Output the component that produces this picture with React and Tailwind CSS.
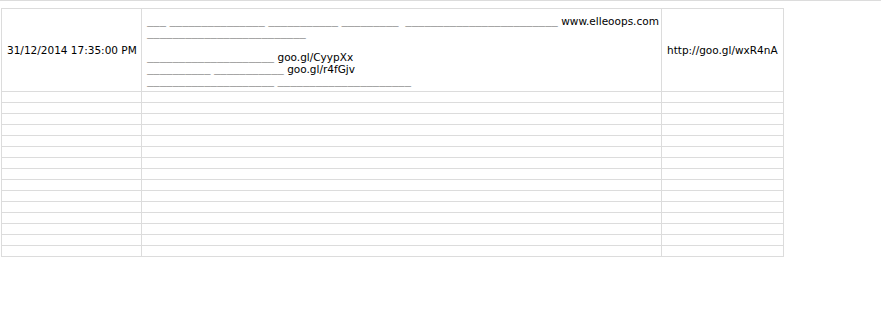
const U = ({n}) => <span className="font-['Liberation_Mono',monospace] text-[10.6px] leading-[0] align-[-1px] text-[#6a6a6a]">{"_".repeat(n)}</span>;

const emptyRows = Array.from({length: 15});

export default function App() {
    return (
        <div className="min-h-[333px] bg-white text-black font-['DejaVu_Sans',Verdana,sans-serif] text-[10.5px] leading-[12px]">
            <div className="h-px bg-[#dcdcdc]"/>
            <div className="mt-[7px] ml-px w-[783px] border-l border-t border-[#dcdcdc]">
                {/* first row with the record */}
                <div className="flex border-b border-[#dcdcdc]">
                    <div className="w-[140px] shrink-0 border-r border-[#dcdcdc] px-[5px] flex items-center whitespace-nowrap">
                        31/12/2014 17:35:00 PM
                    </div>
                    <div className="w-[520px] shrink-0 border-r border-[#dcdcdc] px-[5px] pt-[6px] pb-[4px] whitespace-pre">
                        <div className="h-[12px]"><U n={3}/> <U n={15}/> <U n={11}/> <U n={9}/>  <U n={24}/> www.elleoops.com</div>
                        <div className="h-[12px]"><U n={25}/></div>
                        <div className="h-[12px]"/>
                        <div className="h-[12px]"><U n={20}/> goo.gl/CyypXx</div>
                        <div className="h-[12px]"><U n={10}/> <U n={11}/> goo.gl/r4fGjv</div>
                        <div className="h-[12px]"><U n={20}/> <U n={21}/></div>
                    </div>
                    <div className="w-[122px] shrink-0 border-r border-[#dcdcdc] px-[5px] flex items-center whitespace-nowrap">
                        http://goo.gl/wxR4nA
                    </div>
                </div>
                {emptyRows.map((_, i) => (
                    <div key={i} className="flex h-[11px] border-b border-[#dcdcdc]">
                        <div className="w-[140px] shrink-0 border-r border-[#dcdcdc]"/>
                        <div className="w-[520px] shrink-0 border-r border-[#dcdcdc]"/>
                        <div className="w-[122px] shrink-0 border-r border-[#dcdcdc]"/>
                    </div>
                ))}
            </div>
        </div>
    )
}
